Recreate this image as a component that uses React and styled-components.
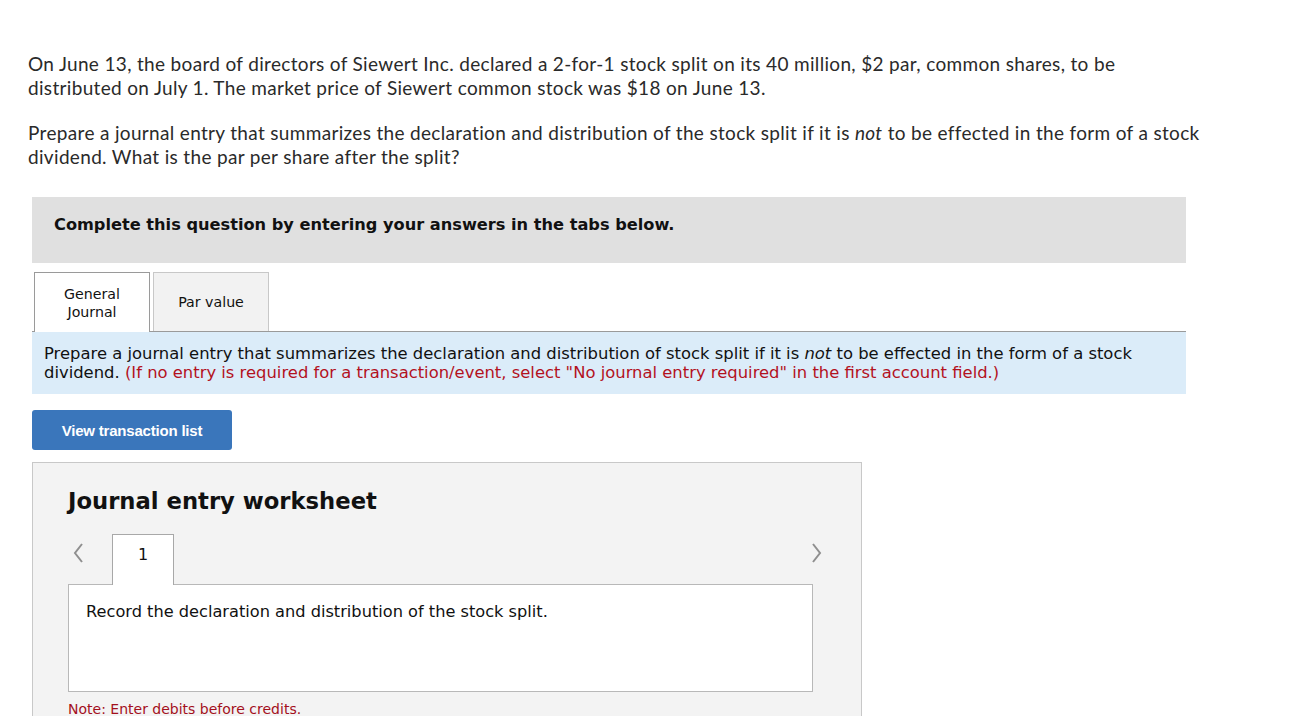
import React from "react";
import styled, { createGlobalStyle } from "styled-components";

const GlobalStyle = createGlobalStyle`
    body {
        margin: 0;
        background: #fff;
    }
`;

function Chevron({ dir }) {
    return (
        <svg width="12" height="22" viewBox="0 0 12 22">
            <path
                d={dir === "left" ? "M10 2 L3 11 L10 20" : "M2 2 L9 11 L2 20"}
                fill="none"
                stroke="#8f8f8f"
                strokeWidth="2"
            />
        </svg>
    );
}

function App() {
    return (
        <>
            <GlobalStyle />
            <Page>
                <Intro>
                    On June 13, the board of directors of Siewert Inc. declared a 2-for-1 stock split on its 40 million, $2 par, common shares, to be
                    <br />
                    distributed on July 1. The market price of Siewert common stock was $18 on June 13.
                </Intro>
                <Intro>
                    Prepare a journal entry that summarizes the declaration and distribution of the stock split if it is <em>not</em> to be effected in the form of a stock
                    <br />
                    dividend. What is the par per share after the split?
                </Intro>
                <Content>
                    <Banner>Complete this question by entering your answers in the tabs below.</Banner>
                    <TabRow>
                        <Tab active>
                            General
                            <br />
                            Journal
                        </Tab>
                        <Tab>Par value</Tab>
                    </TabRow>
                    <Instructions>
                        Prepare a journal entry that summarizes the declaration and distribution of stock split if it is <em>not</em> to be effected in the form of a stock
                        <br />
                        dividend. <Red>(If no entry is required for a transaction/event, select "No journal entry required" in the first account field.)</Red>
                    </Instructions>
                    <Button>View transaction list</Button>
                    <Worksheet>
                        <WorksheetTitle>Journal entry worksheet</WorksheetTitle>
                        <NavRow>
                            <Arrow side="left">
                                <Chevron dir="left" />
                            </Arrow>
                            <StepTab>1</StepTab>
                            <Spacer />
                            <Arrow side="right">
                                <Chevron dir="right" />
                            </Arrow>
                        </NavRow>
                        <EntryBox>Record the declaration and distribution of the stock split.</EntryBox>
                        <Note>Note: Enter debits before credits.</Note>
                    </Worksheet>
                </Content>
            </Page>
        </>
    );
}

export default App;

const Page = styled.div`
    padding: 52px 0 0 28px;
    width: 1260px;
    height: 716px;
    overflow: hidden;
    box-sizing: border-box;
`;
const Intro = styled.p`
    margin: 0 0 21px;
    font-family: "Lato", "Open Sans", sans-serif;
    font-size: 19px;
    letter-spacing: 0.33px;
    line-height: 24px;
    color: #2a2a2a;
    white-space: nowrap;
    em {
        font-style: italic;
    }
`;
const Content = styled.div`
    margin-left: 4px;
    margin-top: 28px;
    width: 1154px;
    font-family: "DejaVu Sans", Verdana, sans-serif;
`;
const Banner = styled.div`
    background: #e0e0e0;
    height: 66px;
    padding: 18px 0 0 22px;
    box-sizing: border-box;
    font-weight: bold;
    font-size: 16.2px;
    color: #111;
`;
const TabRow = styled.div`
    display: flex;
    gap: 3px;
    margin-top: 9px;
    padding-left: 2px;
    border-bottom: 1px solid #9a9a9a;
`;
const Tab = styled.div`
    width: 116px;
    box-sizing: border-box;
    display: flex;
    align-items: center;
    justify-content: center;
    text-align: center;
    font-size: 14.2px;
    line-height: 18px;
    color: #111;
    border: 1px solid ${(p) => (p.active ? "#9a9a9a" : "#c8c8c8")};
    border-bottom: none;
    background: ${(p) => (p.active ? "#fff" : "#f2f2f2")};
    margin-bottom: ${(p) => (p.active ? "-1px" : "0")};
    height: ${(p) => (p.active ? "60px" : "59px")};
`;
const Instructions = styled.div`
    background: #dbecf9;
    padding: 12px 12px 12px;
    font-size: 16.4px;
    line-height: 19px;
    color: #111;
    white-space: nowrap;
    em {
        font-style: italic;
    }
`;
const Red = styled.span`
    color: #b3121e;
`;
const Button = styled.button`
    display: block;
    margin-top: 16px;
    width: 200px;
    height: 40px;
    border: none;
    border-radius: 3px;
    background: #3a76bb;
    color: #fff;
    font-family: "Liberation Sans", Arial, sans-serif;
    font-weight: bold;
    font-size: 15px;
    letter-spacing: -0.2px;
`;
const Worksheet = styled.div`
    margin-top: 12px;
    width: 830px;
    box-sizing: border-box;
    background: #f3f3f3;
    border: 1px solid #c8c8c8;
    padding: 23px 48px 20px 35px;
`;
const WorksheetTitle = styled.h2`
    margin: 0;
    font-size: 22.7px;
    line-height: 30px;
    font-weight: bold;
    color: #111;
`;
const NavRow = styled.div`
    display: flex;
    align-items: flex-start;
    margin-top: 18px;
    margin-right: -14px;
`;
const Arrow = styled.div`
    width: 44px;
    height: 36px;
    display: flex;
    align-items: center;
    justify-content: ${(p) => (p.side === "left" ? "flex-start" : "flex-end")};
    padding: 0 4px;
    box-sizing: border-box;
    margin-top: 1px;
`;
const Spacer = styled.div`
    flex: 1;
`;
const StepTab = styled.div`
    width: 62px;
    height: 51px;
    box-sizing: border-box;
    background: #fff;
    border: 1px solid #a8a8a8;
    border-bottom: none;
    margin-bottom: -1px;
    position: relative;
    z-index: 1;
    text-align: center;
    padding-top: 10px;
    font-size: 16px;
    color: #111;
`;
const EntryBox = styled.div`
    height: 108px;
    box-sizing: border-box;
    background: #fff;
    border: 1px solid #b8b8b8;
    padding: 17px 17px;
    font-size: 16.2px;
    color: #111;
`;
const Note = styled.div`
    margin-top: 9px;
    font-size: 14px;
    color: #a3101c;
`;
